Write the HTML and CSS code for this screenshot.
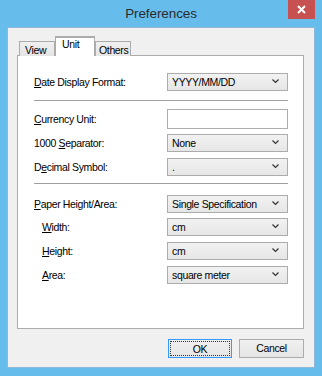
FILE: index.html
```html
<!DOCTYPE html>
<html lang="en">
<head>
  <meta charset="UTF-8">
  <title>Preferences</title>
  <link rel="stylesheet" href="styles.css">
</head>
<body>

  <div class="window">
    <div class="titlebar">
      <span class="title">Preferences</span>
      <div class="close">
        <svg width="9" height="9" viewBox="0 0 9 9"><path d="M1 1L8 8M8 1L1 8" stroke="#fff" stroke-width="2"/></svg>
      </div>
    </div>

    <div class="client">
      <div class="tabs">
        <div class="tab t-view">View</div>
        <div class="tab t-unit active">Unit</div>
        <div class="tab t-others">Others</div>
      </div>

      <div class="panel">
        <div class="row">
          <span class="label"><u>D</u>ate Display Format:</span>
          <div class="combo">YYYY/MM/DD<svg width="7" height="5" viewBox="0 0 7 5"><path d="M0.5 0.5L3.5 3.5L6.5 0.5" stroke="#333" stroke-width="1.2" fill="none"/></svg></div>
        </div>

        <div class="sep"></div>

        <div class="row r-cur">
          <span class="label"><u>C</u>urrency Unit:</span>
          <div class="textbox"></div>
        </div>
        <div class="row r5">
          <span class="label">1000 <u>S</u>eparator:</span>
          <div class="combo">None<svg width="7" height="5" viewBox="0 0 7 5"><path d="M0.5 0.5L3.5 3.5L6.5 0.5" stroke="#333" stroke-width="1.2" fill="none"/></svg></div>
        </div>
        <div class="row r6">
          <span class="label">D<u>e</u>cimal Symbol:</span>
          <div class="combo">.<svg width="7" height="5" viewBox="0 0 7 5"><path d="M0.5 0.5L3.5 3.5L6.5 0.5" stroke="#333" stroke-width="1.2" fill="none"/></svg></div>
        </div>

        <div class="sep sep2"></div>

        <div class="row r-paper">
          <span class="label"><u>P</u>aper Height/Area:</span>
          <div class="combo">Single Specification<svg width="7" height="5" viewBox="0 0 7 5"><path d="M0.5 0.5L3.5 3.5L6.5 0.5" stroke="#333" stroke-width="1.2" fill="none"/></svg></div>
        </div>
        <div class="row r5">
          <span class="label sub"><u>W</u>idth:</span>
          <div class="combo">cm<svg width="7" height="5" viewBox="0 0 7 5"><path d="M0.5 0.5L3.5 3.5L6.5 0.5" stroke="#333" stroke-width="1.2" fill="none"/></svg></div>
        </div>
        <div class="row r6">
          <span class="label sub"><u>H</u>eight:</span>
          <div class="combo">cm<svg width="7" height="5" viewBox="0 0 7 5"><path d="M0.5 0.5L3.5 3.5L6.5 0.5" stroke="#333" stroke-width="1.2" fill="none"/></svg></div>
        </div>
        <div class="row r6">
          <span class="label sub"><u>A</u>rea:</span>
          <div class="combo">square meter<svg width="7" height="5" viewBox="0 0 7 5"><path d="M0.5 0.5L3.5 3.5L6.5 0.5" stroke="#333" stroke-width="1.2" fill="none"/></svg></div>
        </div>
      </div>

      <div class="buttons">
        <div class="btn default"><span>OK</span></div>
        <div class="btn">Cancel</div>
      </div>
    </div>
  </div>

</body>
</html>
```

FILE: styles.css
```css
* {
  box-sizing: border-box;
}

body {
  margin: 0;
  font-family: 'Liberation Sans', Arial, sans-serif;
  font-size: 10.5px;
  letter-spacing: -0.35px;
  color: #000;
}

.window {
  width: 322px;
  height: 376px;
  background: #66bdec;
  display: flex;
  flex-direction: column;
  padding: 0 7px 8px 7px;
}

.titlebar {
  position: relative;
  height: 27px;
  display: flex;
  align-items: center;
  justify-content: center;
  flex-shrink: 0;
}

.title {
  font-size: 13.5px;
  letter-spacing: -0.1px;
  color: #2b2b2b;
  margin-top: -1px;
}

.close {
  position: absolute;
  right: 0;
  top: 0;
  width: 27px;
  height: 19px;
  background: #c75050;
  display: flex;
  align-items: center;
  justify-content: center;
}

.client {
  flex: 1;
  background: #f0f0f0;
  border: 1px solid #8fb8d8;
  padding: 9px 10px 0 9px;
  display: flex;
  flex-direction: column;
}

.tabs {
  display: flex;
  align-items: flex-end;
  padding-left: 2px;
  height: 19px;
  position: relative;
  z-index: 1;
  margin-bottom: -1px;
}

.tab {
  height: 15px;
  padding-top: 2px;
  border: 1px solid #acacac;
  border-bottom: none;
  background: linear-gradient(#f0f0f0, #e5e5e5);
  line-height: 12px;
  color: #000;
}

.t-view {
  width: 36px;
  padding-left: 5px;
}

.t-unit {
  width: 40px;
}

.t-others {
  width: 36px;
  padding-left: 3px;
}

.tab.active {
  height: 20px;
  background: #fff;
  padding-top: 1px;
  padding-left: 7px;
  border-left: none;
  border-right: none;
  box-shadow: inset 1px 0 0 #acacac, inset -1px 0 0 #acacac, inset 0 1px 0 #acacac;
}

.panel {
  height: 274px;
  background: #fff;
  border: 1px solid #acacac;
  padding: 17px 15px 0 16px;
}

.row {
  display: flex;
  align-items: center;
  justify-content: space-between;
}

.label {
  padding-bottom: 1px;
}

.label.sub {
  padding-left: 8px;
}

.combo {
  width: 121px;
  height: 18px;
  border: 1px solid #acacac;
  background: linear-gradient(#f2f2f2, #e6e6e6);
  display: flex;
  align-items: center;
  justify-content: space-between;
  padding: 0 8px 1px 4px;
}

.textbox {
  width: 121px;
  height: 20px;
  border: 1px solid #abadb3;
  background: #fff;
}

.sep {
  margin-top: 9px;
  height: 2px;
  border-top: 1px solid #a0a0a0;
  border-bottom: 1px solid #fff;
}

.sep2 {
  margin-top: 7px;
}

.r-cur {
  margin-top: 7px;
}

.r5 {
  margin-top: 5px;
}

.r6 {
  margin-top: 6px;
}

.r-paper {
  margin-top: 10px;
}

.buttons {
  display: flex;
  justify-content: flex-end;
  gap: 7px;
  margin-top: 10px;
}

.btn {
  width: 65px;
  height: 19px;
  border: 1px solid #acacac;
  background: linear-gradient(#f0f0f0, #e5e5e5);
  display: flex;
  align-items: center;
  justify-content: center;
  padding-bottom: 1px;
}

.btn.default {
  width: 64px;
  border-color: #3399ff;
  padding: 1px;
}

.btn.default span {
  flex: 1;
  align-self: stretch;
  border: 1px dotted #333;
  display: flex;
  align-items: center;
  justify-content: center;
}
```
